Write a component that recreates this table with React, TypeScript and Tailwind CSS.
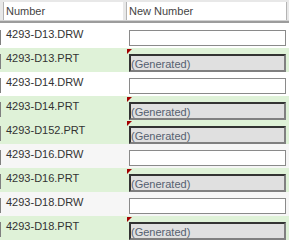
import React from 'react'

type Item = { number: string; generated: boolean }

const items: Item[] = [
  { number: '4293-D13.DRW', generated: false },
  { number: '4293-D13.PRT', generated: true },
  { number: '4293-D14.DRW', generated: false },
  { number: '4293-D14.PRT', generated: true },
  { number: '4293-D152.PRT', generated: true },
  { number: '4293-D16.DRW', generated: false },
  { number: '4293-D16.PRT', generated: true },
  { number: '4293-D18.DRW', generated: false },
  { number: '4293-D18.PRT', generated: true },
]

function HeaderCell({ label, className }: { label: string; className: string }) {
  return (
    <div className={`h-[18px] border-l border-[#b4b4b4] bg-white pl-[2px] pt-[3px] leading-[13px] text-[#444] ${className}`}>
      {label}
    </div>
  )
}

function Row({ item, striped }: { item: Item; striped: boolean }) {
  const bg = item.generated ? 'bg-[#dff2d8]' : striped ? 'bg-[#f6f6f6]' : 'bg-white'
  return (
    <div className={`flex h-[24px] ${bg}`}>
      <div className="flex w-[126px] shrink-0">
        {/* edge of the scrolled-off column */}
        <span className="mt-[6px] h-[15px] w-px bg-[#808080]" />
        <span className="pl-[5px] pt-[4px] leading-[13px] text-[#333]">{item.number}</span>
      </div>
      <div className="relative flex-1 px-[3px] pt-[6px]">
        {item.generated ? (
          <>
            {/* changed-value marker */}
            <svg className="absolute left-[1px] top-[1px]" width="5" height="5" viewBox="0 0 5 5">
              <polygon points="0,0 5,0 0,5" fill="#a30000" />
            </svg>
            <div className="h-[18px] overflow-hidden border-2 border-b-[#808080] border-l-[#333] border-r-[#808080] border-t-[#333] bg-[#e0e0e0] leading-[16px] text-[#566070]">
              (Generated)
            </div>
          </>
        ) : (
          <div className="h-[16px] border border-[#8a8a8a] bg-white" />
        )}
      </div>
    </div>
  )
}

export default function App() {
  return (
    <div className="h-[242px] w-[289px] overflow-hidden bg-white font-[Liberation_Sans,Arial,sans-serif] text-[11px]">
      <div className="bg-[#e8e8e8]">
        <div className="flex pl-[3px] pt-[2px]">
          <HeaderCell label="Number" className="w-[120px]" />
          <HeaderCell label="New Number" className="ml-[3px] w-[161px] border-r" />
        </div>
        <div className="h-px bg-[#d2d2d2]" />
        <div className="h-[2px] bg-[#9c9c9c]" />
        <div className="h-px bg-white" />
      </div>
      {items.map((item, i) => (
        <Row key={item.number} item={item} striped={i % 2 === 1} />
      ))}
    </div>
  )
}
